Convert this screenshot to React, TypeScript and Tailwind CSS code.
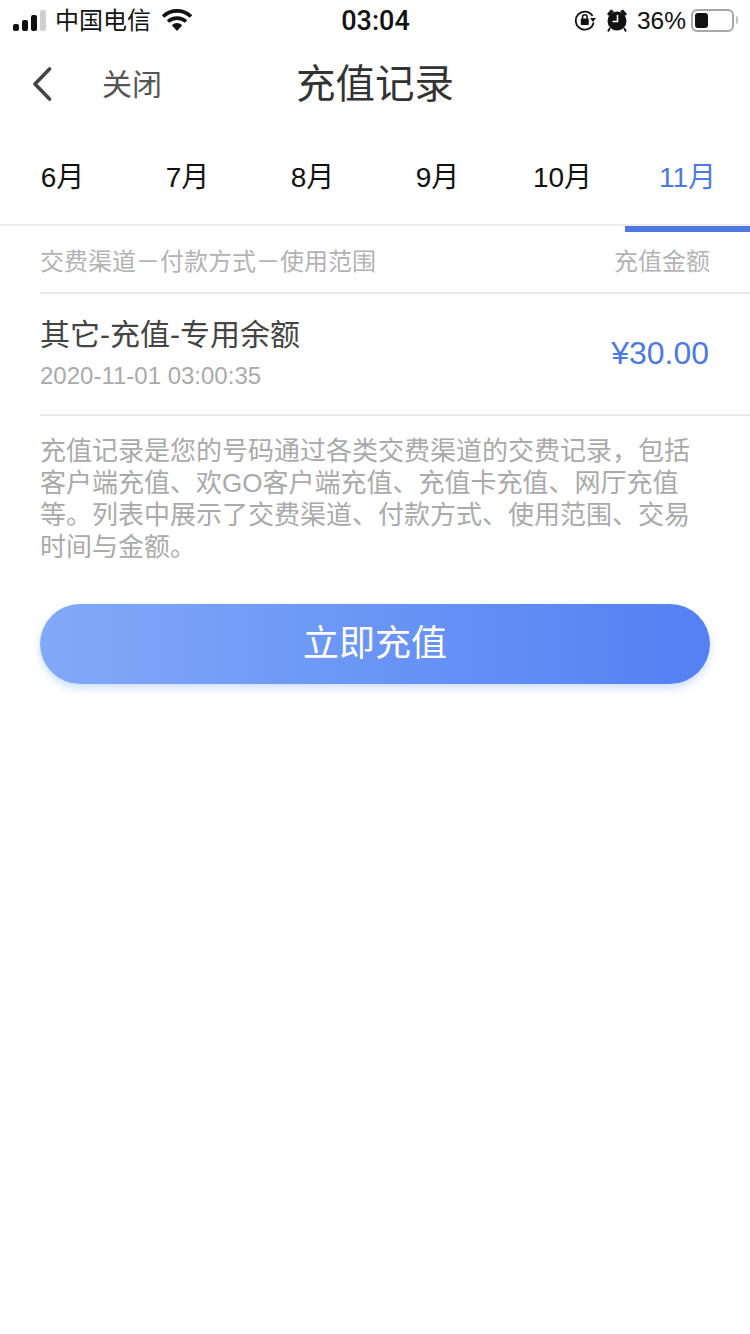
import React from "react";

const months = ["6月", "7月", "8月", "9月", "10月", "11月"];
const font = "font-['Liberation_Sans','Noto_Sans_CJK_SC',sans-serif]";

function Signal() {
  return (
    <svg width="34" height="21" viewBox="0 0 34 21" className="block">
      <rect x="0" y="14" width="6" height="7" rx="2" fill="#111" />
      <rect x="9" y="10" width="6" height="11" rx="2" fill="#111" />
      <rect x="18" y="5" width="6" height="16" rx="2" fill="#111" />
      <rect x="27" y="0" width="6" height="21" rx="2" fill="#cfcfcf" />
    </svg>
  );
}

function Wifi() {
  return (
    <svg width="30" height="22" viewBox="0 0 30 22" className="block">
      <path d="M1 7.5 C9 0 21 0 29 7.5" fill="none" stroke="#111" strokeWidth="3.6" />
      <path d="M6 12.5 C11 8 19 8 24 12.5" fill="none" stroke="#111" strokeWidth="3.6" />
      <path d="M9.8 16.2 C13 13.4 17 13.4 20.2 16.2 L15 22 Z" fill="#111" />
    </svg>
  );
}

function RotationLock() {
  return (
    <svg width="22" height="22" viewBox="0 0 22 22" className="block">
      <path d="M18.5 7 A9 9 0 1 0 19.6 13.5" fill="none" stroke="#111" strokeWidth="1.8" />
      <path d="M16 9 L22 9 L19 13 Z" fill="#111" />
      <rect x="6.8" y="9.6" width="8" height="6.4" rx="1" fill="#111" />
      <path d="M8.5 10 V8 a2.3 2.3 0 0 1 4.6 0 V10" fill="none" stroke="#111" strokeWidth="1.5" />
    </svg>
  );
}

function Alarm() {
  return (
    <svg width="22" height="24" viewBox="0 0 22 24" className="block">
      <circle cx="11" cy="13" r="9.5" fill="#111" />
      <path d="M1 6 L5 1.5 L8 3.2 L3 8 Z" fill="#111" />
      <path d="M21 6 L17 1.5 L14 3.2 L19 8 Z" fill="#111" />
      <path d="M4 20 L2 23.5 M18 20 L20 23.5" stroke="#111" strokeWidth="1.8" />
      <path d="M11.5 7 V13.5 H6.5" fill="none" stroke="#fff" strokeWidth="1.6" />
    </svg>
  );
}

function Battery() {
  return (
    <div className="flex items-center">
      <div className="flex h-[23px] w-[43px] items-center rounded-[6px] border-2 border-[#a8a8a8] p-[2px]">
        <div className="h-[15px] w-[13px] rounded-[3px] bg-[#111]" />
      </div>
      <div className="ml-[2px] h-[8px] w-[2px] rounded-r-[2px] bg-[#c4c4c4]" />
    </div>
  );
}

export default function App() {
  return (
    <div className={`min-h-[1334px] w-[750px] bg-white ${font}`}>
      <div className="flex h-[40px] items-center justify-between pl-[13px] pr-[12px] text-[#111]">
        <div className="flex w-[260px] items-center">
          <Signal />
          <span className="ml-[8px] mt-[2px] text-[24px] leading-none">中国电信</span>
          <span className="ml-[11px]"><Wifi /></span>
        </div>
        <span className="mt-[2px] font-['Roboto',sans-serif] text-[27px] font-medium leading-none">03:04</span>
        <div className="flex w-[260px] items-center justify-end">
          <RotationLock />
          <span className="ml-[10px]"><Alarm /></span>
          <span className="ml-[9px] mt-[2px] text-[24.5px] leading-none">36%</span>
          <span className="ml-[5px]"><Battery /></span>
        </div>
      </div>

      <div className="relative flex h-[88px] items-center pl-[32px]">
        <svg width="20" height="34" viewBox="0 0 20 34" className="block">
          <path d="M17.5 2 L3 17 L17.5 32" fill="none" stroke="#444" strokeWidth="3.6" strokeLinecap="round" strokeLinejoin="round" />
        </svg>
        <span className="ml-[50px] mt-[2px] text-[30px] leading-none text-[#555]">关闭</span>
        <h1 className="absolute inset-x-0 mt-[2px] text-center text-[39.5px] font-normal leading-none text-[#333]">充值记录</h1>
      </div>

      <div className="grid h-[98px] grid-cols-6 items-center border-b-2 border-[#ececec] pt-[4px]">
        {months.map((m) => (
          <div key={m} className={`text-center text-[28px] leading-none ${m === "11月" ? "text-[#4d79e3]" : "text-[#111]"}`}>
            {m}
          </div>
        ))}
      </div>
      <div className="flex h-[6px] justify-end">
        <div className="w-[125px] bg-[#4d79e3]" />
      </div>

      <div className="pl-[40px]">
        <div className="flex h-[62px] items-center justify-between border-b-2 border-[#e8e8e8] pr-[40px] text-[24px] leading-none text-[#b3b3b3]">
          <span>交费渠道－付款方式－使用范围</span>
          <span>充值金额</span>
        </div>
        <div className="flex h-[122px] items-center justify-between border-b-2 border-[#e8e8e8] pr-[41px]">
          <div>
            <div className="text-[30px] leading-none text-[#444]">其它-充值-专用余额</div>
            <div className="mt-[14px] text-[24px] leading-none text-[#aaa]">2020-11-01 03:00:35</div>
          </div>
          <span className="mb-[2px] text-[32px] leading-none text-[#4d79e3]">¥30.00</span>
        </div>
      </div>

      <p className="mx-[40px] mt-[19px] text-[26px] leading-[32px] text-[#aaa]">
        充值记录是您的号码通过各类交费渠道的交费记录，包括客户端充值、欢GO客户端充值、充值卡充值、网厅充值等。列表中展示了交费渠道、付款方式、使用范围、交易时间与金额。
      </p>

      <button className="mx-[40px] mt-[41px] flex h-[80px] w-[670px] items-center justify-center rounded-[40px] bg-gradient-to-r from-[#82a9f8] to-[#5380f3] text-[36px] leading-none text-white shadow-[0_4px_8px_rgba(110,160,245,0.35)]">
        立即充值
      </button>
    </div>
  );
}
